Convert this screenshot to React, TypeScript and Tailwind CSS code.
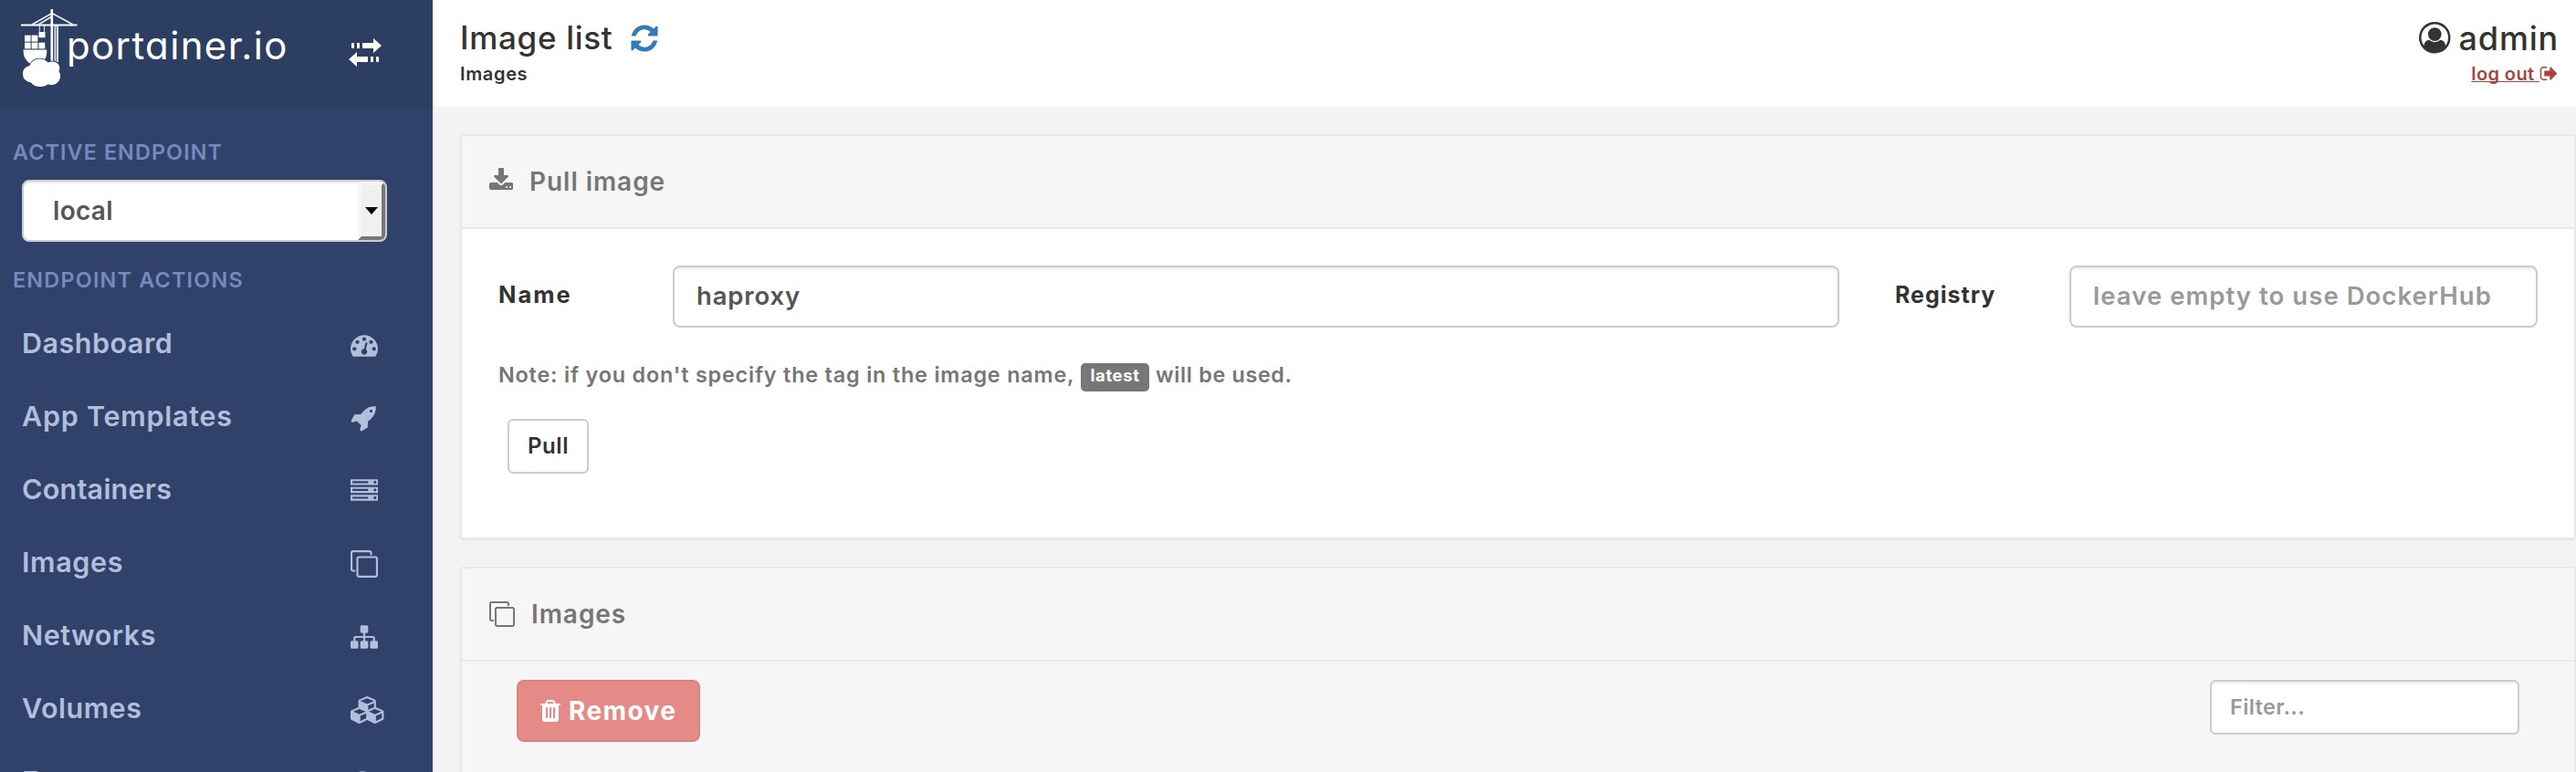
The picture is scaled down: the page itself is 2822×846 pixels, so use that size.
import type { ReactNode } from "react";

const ICONS = {
  download:
    "M1344 1344q0-26-19-45t-45-19-45 19-19 45 19 45 45 19 45-19 19-45zm256 0q0-26-19-45t-45-19-45 19-19 45 19 45 45 19 45-19 19-45zm128-224v320q0 40-28 68t-68 28h-1472q-40 0-68-28t-28-68v-320q0-40 28-68t68-28h465l135 136q58 56 136 56t136-56l136-136h464q40 0 68 28t28 68zm-325-569q17 41-14 70l-448 448q-18 19-45 19t-45-19l-448-448q-31-29-14-70 17-39 59-39h256v-448q0-26 19-45t45-19h256q26 0 45 19t19 45v448h256q42 0 59 39z",
  refresh:
    "M1639 1056q0 5-1 7-64 268-268 434.5t-478 166.5q-146 0-282.5-55t-243.5-157l-129 129q-19 19-45 19t-45-19-19-45v-448q0-26 19-45t45-19h448q26 0 45 19t19 45-19 45l-137 137q71 66 161 102t187 36q134 0 250-65t186-179q11-17 53-117 8-23 30-23h192q13 0 22.5 9.5t9.5 22.5zm25-800v448q0 26-19 45t-45 19h-448q-26 0-45-19t-19-45 19-45l138-138q-148-137-349-137-134 0-250 65t-186 179q-11 17-53 117-8 23-30 23h-199q-13 0-22.5-9.5t-9.5-22.5v-7q65-268 270-434.5t480-166.5q146 0 284 55.5t245 156.5l130-129q19-19 45-19t45 19 19 45z",
  tachometer:
    "M384 1152q0-53-37.5-90.5t-90.5-37.5-90.5 37.5-37.5 90.5 37.5 90.5 90.5 37.5 90.5-37.5 37.5-90.5zm192-448q0-53-37.5-90.5t-90.5-37.5-90.5 37.5-37.5 90.5 37.5 90.5 90.5 37.5 90.5-37.5 37.5-90.5zm428 481l101-382q6-26-7.5-48.5t-38.5-29.5-48 6.5-30 39.5l-101 382q-60 5-107 43.5t-63 98.5q-20 77 20 146t117 89 146-20 89-117q16-60-6-117t-72-91zm660-33q0-53-37.5-90.5t-90.5-37.5-90.5 37.5-37.5 90.5 37.5 90.5 90.5 37.5 90.5-37.5 37.5-90.5zm-640-640q0-53-37.5-90.5t-90.5-37.5-90.5 37.5-37.5 90.5 37.5 90.5 90.5 37.5 90.5-37.5 37.5-90.5zm448 192q0-53-37.5-90.5t-90.5-37.5-90.5 37.5-37.5 90.5 37.5 90.5 90.5 37.5 90.5-37.5 37.5-90.5zm320 448q0 261-141 483-19 29-54 29h-1402q-35 0-54-29-141-221-141-483 0-182 71-348t191-286 286-191 348-71 348 71 286 191 191 286 71 348z",
  rocket:
    "M1440 448q0-40-28-68t-68-28-68 28-28 68 28 68 68 28 68-28 28-68zm224-288q0 249-75.5 430.5t-253.5 360.5q-81 80-195 176l-20 379q-2 16-16 26l-384 224q-7 4-16 4-12 0-23-9l-64-64q-13-14-8-32l85-276-281-281-276 85q-3 1-9 1-14 0-23-9l-64-64q-17-19-5-39l224-384q10-14 26-16l379-20q96-114 176-195 188-187 358-258t431-71q14 0 24 9.5t10 22.5z",
  server:
    "M128 1408h1024v-128h-1024v128zm0-512h1024v-128h-1024v128zm1568 448q0-40-28-68t-68-28-68 28-28 68 28 68 68 28 68-28 28-68zm-1568-960h1024v-128h-1024v128zm1568 448q0-40-28-68t-68-28-68 28-28 68 28 68 68 28 68-28 28-68zm0-512q0-40-28-68t-68-28-68 28-28 68 28 68 68 28 68-28 28-68zm96 832v384h-1792v-384h1792zm0-512v384h-1792v-384h1792zm0-512v384h-1792v-384h1792z",
  clone:
    "M1664 1632v-1088q0-13-9.5-22.5t-22.5-9.5h-1088q-13 0-22.5 9.5t-9.5 22.5v1088q0 13 9.5 22.5t22.5 9.5h1088q13 0 22.5-9.5t9.5-22.5zm128-1088v1088q0 66-47 113t-113 47h-1088q-66 0-113-47t-47-113v-1088q0-66 47-113t113-47h1088q66 0 113 47t47 113zm-384-384v160h-128v-160q0-13-9.5-22.5t-22.5-9.5h-1088q-13 0-22.5 9.5t-9.5 22.5v1088q0 13 9.5 22.5t22.5 9.5h160v128h-160q-66 0-113-47t-47-113v-1088q0-66 47-113t113-47h1088q66 0 113 47t47 113z",
  sitemap:
    "M1792 1248v320q0 40-28 68t-68 28h-320q-40 0-68-28t-28-68v-320q0-40 28-68t68-28h96v-192h-512v192h96q40 0 68 28t28 68v320q0 40-28 68t-68 28h-320q-40 0-68-28t-28-68v-320q0-40 28-68t68-28h96v-192h-512v192h96q40 0 68 28t28 68v320q0 40-28 68t-68 28h-320q-40 0-68-28t-28-68v-320q0-40 28-68t68-28h96v-192q0-52 38-90t90-38h512v-192h-96q-40 0-68-28t-28-68v-320q0-40 28-68t68-28h320q40 0 68 28t28 68v320q0 40-28 68t-68 28h-96v192h512q52 0 90 38t38 90v192h96q40 0 68 28t28 68z",
  cubes:
    "M640 1632l384-192v-314l-384 164v342zm-64-454l404-173-404-173-404 173zm1088 454l384-192v-314l-384 164v342zm-64-454l404-173-404-173-404 173zm-448-293l384-165v-266l-384 164v267zm-64-379l441-189-441-189-441 189zm1088 518v416q0 36-19 67t-52 47l-448 224q-25 14-57 14t-57-14l-448-224q-4-2-7-4-2 2-7 4l-448 224q-25 14-57 14t-57-14l-448-224q-33-16-52-47t-19-67v-416q0-38 21.5-70t56.5-48l434-186v-400q0-38 21.5-70t56.5-48l448-192q23-10 50-10t50 10l448 192q35 16 56.5 48t21.5 70v400l434 186q36 16 57 48t21 70z",
  history:
    "M1536 896q0 156-61 298t-164 245-245 164-298 61q-172 0-327-72.5t-264-204.5q-7-10-6.5-22.5t8.5-20.5l137-138q10-9 25-9 16 2 23 12 73 95 179 147t225 52q104 0 198.5-40.5t163.5-109.5 109.5-163.5 40.5-198.5-40.5-198.5-109.5-163.5-163.5-109.5-198.5-40.5q-98 0-188 35.5t-160 101.5l137 138q31 30 14 69-17 40-59 40h-448q-26 0-45-19t-19-45v-448q0-42 40-59 39-17 69 14l130 129q107-101 244.5-156.5t284.5-55.5q156 0 298 61t245 164 164 245 61 298z",
  signOut:
    "M704 1440q0 4 1 20t.5 26.5-3 23.5-10 19.5-20.5 6.5h-320q-119 0-203.5-84.5t-84.5-203.5v-704q0-119 84.5-203.5t203.5-84.5h320q13 0 22.5 9.5t9.5 22.5q0 4 1 20t.5 26.5-3 23.5-10 19.5-20.5 6.5h-320q-66 0-113 47t-47 113v704q0 66 47 113t113 47h312l11.5 1 11.5 3 8 5.5 7 9 2 13.5zm928-544q0 26-19 45l-544 544q-19 19-45 19t-45-19-19-45v-288h-448q-26 0-45-19t-19-45v-384q0-26 19-45t45-19h448v-288q0-26 19-45t45-19 45 19l544 544q19 19 19 45z",
  user:
    "M896 0q182 0 348 71t286 191 191 286 71 348q0 181-70.5 347t-190.5 286-286 191.5-349 71.5-349-71-285.5-191.5-190.5-286-71-347.5 71-348 191-286 286-191 348-71zm619 1351q149-205 149-455 0-156-61-298t-164-245-245-164-298-61-298 61-245 164-164 245-61 298q0 250 149 455 66-327 306-327 131 128 313 128t313-128q240 0 306 327zm-235-647q0-159-112.5-271.5t-271.5-112.5-271.5 112.5-112.5 271.5 112.5 271.5 271.5 112.5 271.5-112.5 112.5-271.5z",
  trash:
    "M704 1376v-704q0-14-9-23t-23-9h-64q-14 0-23 9t-9 23v704q0 14 9 23t23 9h64q14 0 23-9t9-23zm256 0v-704q0-14-9-23t-23-9h-64q-14 0-23 9t-9 23v704q0 14 9 23t23 9h64q14 0 23-9t9-23zm256 0v-704q0-14-9-23t-23-9h-64q-14 0-23 9t-9 23v704q0 14 9 23t23 9h64q14 0 23-9t9-23zm-544-992h448l-48-117q-7-9-17-11h-317q-10 2-17 11zm928 32v64q0 14-9 23t-23 9h-96v948q0 83-47 143.5t-113 60.5h-832q-66 0-113-58.5t-47-141.5v-952h-96q-14 0-23-9t-9-23v-64q0-14 9-23t23-9h309l70-167q15-37 54-63t79-26h320q40 0 79 26t54 63l70 167h309q14 0 23 9t9 23z",
};

type IconName = keyof typeof ICONS;

function Icon({ name, className = "" }: { name: IconName; className?: string }) {
  return (
    <svg
      viewBox={name === "cubes" ? "0 0 2304 1792" : "0 0 1792 1792"}
      className={`shrink-0 fill-current ${className}`}
      aria-hidden="true"
    >
      <path d={ICONS[name]} />
    </svg>
  );
}

function CraneLogo() {
  return (
    <svg viewBox="22 8 64 90" className="h-[90px] w-[64px] shrink-0" aria-hidden="true">
      <g stroke="#fff" fill="none">
        <path d="M23 27.5H84.5" strokeWidth="2.2" />
        <path d="M35 27L57 14.5L80 27M42 27L57 18" strokeWidth="1.6" opacity="0.9" />
        <path d="M56.8 10V68" strokeWidth="2.6" />
        <path d="M60.4 28V68M63 28V68" strokeWidth="1.9" opacity="0.85" />
        <path d="M43.3 28V35M48.5 28V35" strokeWidth="1.1" opacity="0.8" />
      </g>
      <g fill="#fff">
        <rect x="42.5" y="35" width="7" height="6.2" />
        <rect x="27" y="38.6" width="6.6" height="7" />
        <rect x="34.6" y="38.6" width="6.8" height="7" />
        <rect x="27" y="46.6" width="6.6" height="6.8" />
        <rect x="34.6" y="46.6" width="6.8" height="6.8" />
        <rect x="42.5" y="46.6" width="6.8" height="6.8" />
        <path d="M25.5 54.6H51.2Q52 62 47 69L35 71Q25 66 25.5 54.6Z" />
      </g>
      <g fill="#fff" stroke="#2d3e63" strokeWidth="1.6" paintOrder="stroke">
        <path d="M34 90.5Q25 89 25 81Q25 73.500 32.500 72Q35.500 64.500 43 64.500Q49 64.500 52.500 68.500Q60 65.500 64 70.500Q66.500 74 64.500 78Q67.500 82.500 65 88Q61 94.500 52.500 92.500Q48 95.500 43 95Q37 94.500 34 90.500Z" />
      </g>
    </svg>
  );
}

function ToggleIcon() {
  return (
    <svg viewBox="0 0 36 32" className="h-8 w-9 shrink-0 fill-white" aria-hidden="true">
      <rect x="3" y="5" width="3" height="6" rx="1" />
      <rect x="9" y="5" width="3" height="6" />
      <path d="M15 5H27V0L36 8L27 16V11H15Z" />
      <path d="M21 20H9V15L0 23L9 31V26H21Z" />
      <rect x="24" y="20" width="3" height="6" />
      <rect x="30" y="20" width="3" height="6" rx="1" />
    </svg>
  );
}

const NAV: { label: string; icon: IconName; text: string; wide?: boolean }[] = [
  { label: "Dashboard", icon: "tachometer", text: "tracking-[0.5px]" },
  { label: "App Templates", icon: "rocket", text: "tracking-[0.75px]" },
  { label: "Containers", icon: "server", text: "tracking-[0.25px]" },
  { label: "Images", icon: "clone", text: "tracking-[0.65px]" },
  { label: "Networks", icon: "sitemap", text: "tracking-[0.5px]" },
  { label: "Volumes", icon: "cubes", text: "tracking-[0.5px]", wide: true },
  { label: "Events", icon: "history", text: "tracking-[0.5px]" },
];

function Sidebar() {
  return (
    <aside className="flex w-[474px] shrink-0 flex-col bg-[#30426a]">
      <div className="flex h-[119px] shrink-0 items-start bg-[#2d3e63] pt-2 pl-[22px]">
        <CraneLogo />
        <span className="-ml-[13px] mt-1 w-[309px] text-[42px] leading-[76px] tracking-[1.35px] text-white [font-feature-settings:'cv11']">
          portainer.io
        </span>
        <span className="mt-[34px]">
          <ToggleIcon />
        </span>
      </div>
      <div className="flex h-[78px] shrink-0 items-center pt-[17px] pl-[14px] text-[23.4px] font-semibold tracking-[1.08px] text-[#738bc0]">
        ACTIVE ENDPOINT
      </div>
      <div className="ml-6 flex h-[68px] w-[400px] shrink-0 items-stretch overflow-hidden rounded-lg border-2 border-[#ccc] bg-white shadow-[inset_0_2px_2px_rgba(0,0,0,0.075)]">
        <span className="flex flex-1 items-center pl-8 text-[28px] font-semibold tracking-[0.3px] text-[#555]">
          local
        </span>
        <span className="flex w-[30px] items-center justify-center border-4 border-t-[#f5f5f5] border-r-[#777] border-b-[#777] border-l-[#f5f5f5] bg-[#f0f0f0]">
          <svg viewBox="0 0 14 8" className="h-2 w-[14px] shrink-0 fill-black" aria-hidden="true">
            <path d="M0 0H14L7 8Z" />
          </svg>
        </span>
      </div>
      <div className="flex h-[71px] shrink-0 items-center pt-3 pl-[14px] text-[23.4px] font-semibold tracking-[1.2px] text-[#738bc0]">
        ENDPOINT ACTIONS
      </div>
      <nav>
        {NAV.map((item) => (
          <a key={item.label} className="flex h-20 items-center pl-6 text-[#b2bfdc]">
            <span className={`w-[360px] text-[30.5px] font-semibold ${item.text}`}>{item.label}</span>
            <Icon name={item.icon} className={item.wide ? "mt-[3px] h-[30px] w-[38.6px]" : "mt-[3px] size-[30px]"} />
          </a>
        ))}
      </nav>
    </aside>
  );
}

function Panel({ icon, title, children, className = "" }: { icon: ReactNode; title: ReactNode; children: ReactNode; className?: string }) {
  return (
    <section className={`shrink-0 rounded border-2 border-[#e9e9e9] shadow-[0_1px_2px_rgba(0,0,0,0.05)] ${className}`}>
      <div className="flex h-[102px] items-center border-b-2 border-[#e9e9e9] bg-[#f6f6f6] text-[#767676]">
        {icon}
        {title}
      </div>
      {children}
    </section>
  );
}

const field = "flex items-center border-2 border-[#ccc] bg-white font-semibold shadow-[inset_0_2px_2px_rgba(0,0,0,0.075)]";

export default function App() {
  return (
    <div className="flex h-[846px] w-[2822px] overflow-hidden bg-[#f3f3f3] font-['Inter',sans-serif] whitespace-nowrap text-[#333]">
      <Sidebar />
      <main className="flex flex-1 flex-col">
        <header className="flex h-[117px] shrink-0 justify-between bg-white pt-5 pr-[19px] pl-[30px]">
          <div>
            <div className="flex h-[43px] items-center">
              <h1 className="w-[185px] text-[35px] font-medium tracking-[0.7px]">Image list</h1>
              <Icon name="refresh" className="size-[34px] text-[#337ab7]" />
            </div>
            <div className="flex h-[35px] items-center text-[20px] font-semibold tracking-[0.65px]">Images</div>
          </div>
          <div className="flex flex-col items-end">
            <div className="flex h-[43px] items-center gap-[9px]">
              <Icon name="user" className="size-[34.5px]" />
              <span className="text-[36px] font-medium tracking-[0.8px]">admin</span>
            </div>
            <a className="flex h-[35px] items-center text-[#a94442]">
              <span className="text-[20px] font-semibold tracking-[0.4px] whitespace-pre underline decoration-1 underline-offset-1 [text-decoration-skip-ink:none]">
                {"log out "}
              </span>
              <Icon name="signOut" className="size-[21px]" />
            </a>
          </div>
        </header>

        <div className="flex flex-col gap-[30px] pt-[30px] pl-[30px]">
          <Panel
            className="h-[444px] bg-white"
            icon={<Icon name="download" className="mb-0.5 ml-[29px] size-[28px]" />}
            title={<h2 className="ml-[17px] text-[28px] font-semibold tracking-[0.95px]">Pull image</h2>}
          >
            <div className="pt-10 pl-10">
              <div className="flex h-[68px] items-center">
                <label className="w-[191px] pb-[3px] text-[25.5px] font-bold tracking-[2px]">Name</label>
                <div className={`${field} h-[68px] w-[1278px] rounded-lg pl-6 text-[27.5px] tracking-[0.85px] text-[#555]`}>haproxy</div>
                <label className="ml-[61px] w-[191px] pb-[3px] text-[25px] font-bold tracking-[1px]">Registry</label>
                <div className={`${field} h-[68px] w-[513px] rounded-lg pl-6 text-[27.5px] tracking-[1.05px] text-[#999]`}>
                  leave empty to use DockerHub
                </div>
              </div>
              <p className="mt-[30px] flex h-[43px] items-center text-[23.4px] font-semibold text-[#767676]">
                <span className="w-[638px] tracking-[0.8px]">Note: if you don't specify the tag in the image name,</span>
                <span className="mt-1.5 flex h-[31px] w-[75px] items-center justify-center rounded-[5px] bg-[#777] pb-1 text-[18.5px] font-bold tracking-[0.6px] text-white">
                  latest
                </span>
                <span className="ml-[7px] tracking-[0.65px]">will be used.</span>
              </p>
              <button className="mt-[27px] ml-[10px] flex h-[60px] w-[89px] items-center justify-center rounded-md border-2 border-[#ccc] bg-white text-[24px] font-semibold tracking-[0.6px]">
                Pull
              </button>
            </div>
          </Panel>

          <Panel
            className="h-[400px] bg-[#f6f6f6]"
            icon={<Icon name="clone" className="ml-[30px] size-[28px]" />}
            title={<h2 className="ml-[18px] text-[28px] font-semibold tracking-[0.95px]">Images</h2>}
          >
            <div className="flex items-start justify-between px-[60px] pt-5">
              <button className="flex h-[68px] w-[201px] items-center gap-1.5 rounded-lg border-2 border-[#e07f7c] bg-[#e48b88] pl-[21px] text-[28px] font-bold tracking-[1.4px] text-white">
                <Icon name="trash" className="size-[28px]" />
                Remove
              </button>
              <div className={`${field} h-[60px] w-[339px] rounded-md pl-5 text-[23.4px] tracking-[0.4px] text-[#999]`}>Filter...</div>
            </div>
          </Panel>
        </div>
      </main>
    </div>
  );
}
